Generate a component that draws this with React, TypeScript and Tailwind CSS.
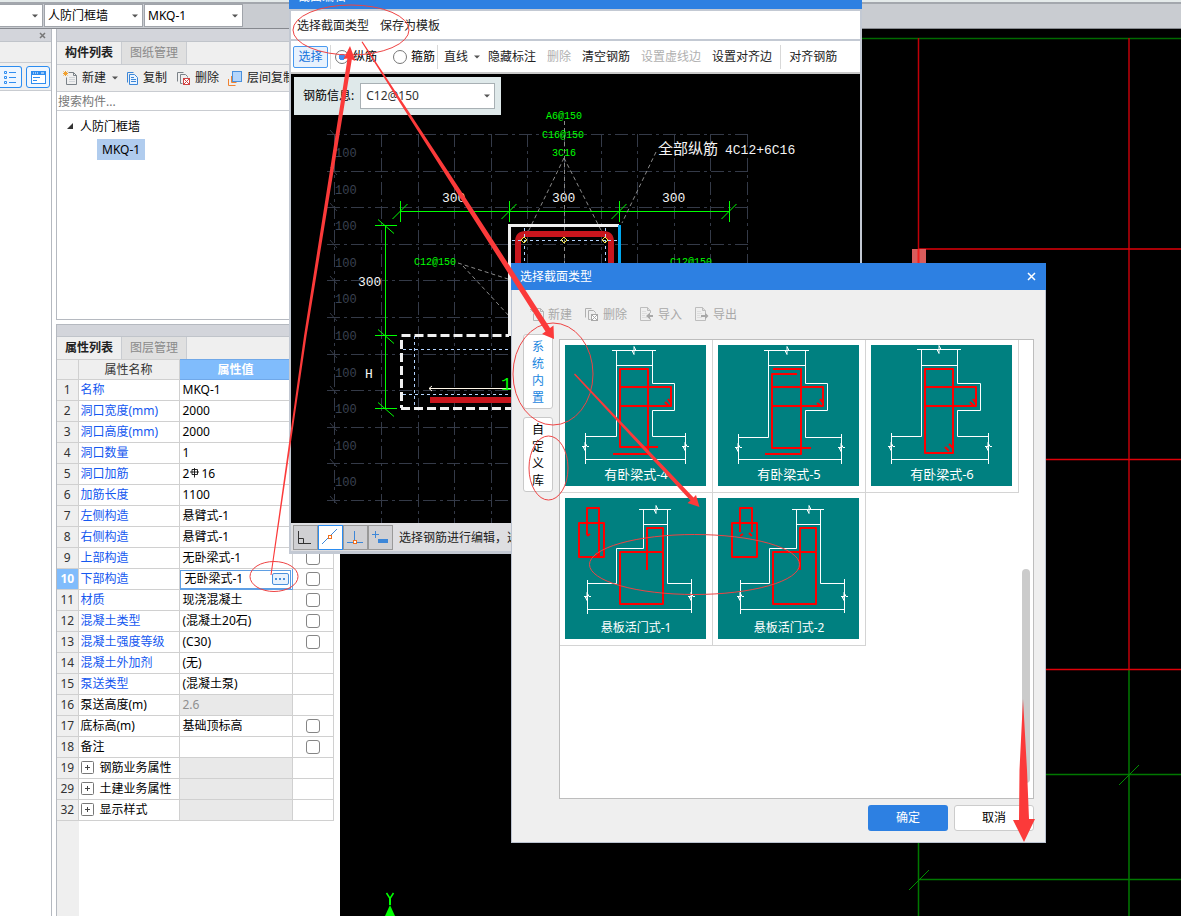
import React, { useState } from 'react';

const propertyRows = [
  { no: 1, name: '名称', value: 'MKQ-1', link: true },
  { no: 2, name: '洞口宽度(mm)', value: '2000', link: true, check: true },
  { no: 3, name: '洞口高度(mm)', value: '2000', link: true, check: true },
  { no: 4, name: '洞口数量', value: '1', link: true, check: true },
  { no: 5, name: '洞口加筋', value: '2Φ16', link: true, check: true },
  { no: 6, name: '加筋长度', value: '1100', link: true, check: true },
  { no: 7, name: '左侧构造', value: '悬臂式-1', link: true, check: true },
  { no: 8, name: '右侧构造', value: '悬臂式-1', link: true, check: true },
  { no: 9, name: '上部构造', value: '无卧梁式-1', link: true, check: true },
  { no: 10, name: '下部构造', value: '无卧梁式-1', link: true, check: true },
  { no: 11, name: '材质', value: '现浇混凝土', link: true, check: true },
  { no: 12, name: '混凝土类型', value: '(混凝土20石)', link: true, check: true },
  { no: 13, name: '混凝土强度等级', value: '(C30)', link: true, check: true },
  { no: 14, name: '混凝土外加剂', value: '(无)', link: true },
  { no: 15, name: '泵送类型', value: '(混凝土泵)', link: true },
  { no: 16, name: '泵送高度(m)', value: '2.6', disabled: true },
  { no: 17, name: '底标高(m)', value: '基础顶标高', check: true },
  { no: 18, name: '备注', value: '', check: true },
  { no: 19, name: '钢筋业务属性', group: true },
  { no: 29, name: '土建业务属性', group: true },
  { no: 32, name: '显示样式', group: true },
];

function Caret({ className = '' }) {
  return (
    <svg className={`shrink-0 ${className}`} width="6" height="4" viewBox="0 0 6 4">
      <path d="M0 0.5h6L3 3.5z" fill="#555" />
    </svg>
  );
}

function Picker({ label, value, className, selectClass }) {
  return (
    <div className={`relative ${className}`}>
      <select aria-label={label} className={`w-full h-full appearance-none bg-white border outline-none ${selectClass}`}>
        <option>{value}</option>
      </select>
      <Caret className="absolute right-[5px] top-1/2 -translate-y-1/2 pointer-events-none" />
    </div>
  );
}

/* ---------- toolbar icons ---------- */

function NewIcon({ muted = false }) {
  return (
    <svg width="15" height="15" viewBox="0 0 15 15" fill="none">
      <path d="M5.5 1.5h5l3 3v9h-10v-7" stroke={muted ? '#b5b5b5' : '#7b8288'} />
      <path d="M10.5 1.5v3h3" stroke={muted ? '#b5b5b5' : '#7b8288'} />
      <path d="M6 6.5h6M6 8.5h6M6 10.5h6" stroke={muted ? '#dedede' : '#d0d4d8'} />
      <path d="M2.5 0v5M0 2.5h5M0.5 0.5l4 4M4.5 0.5l-4 4" stroke={muted ? '#b5b5b5' : '#f0a030'} />
    </svg>
  );
}

function CopyIcon() {
  return (
    <svg width="13" height="15" viewBox="0 0 13 15" fill="none">
      <path d="M1.5 11.5v-10h6" stroke="#3d87d8" />
      <path d="M3.5 3.5h5l3 3v7h-8z" fill="#eaf4ff" stroke="#3d87d8" />
      <path d="M5 6.5h3M5 8.5h5M5 10.5h5" stroke="#3d87d8" />
    </svg>
  );
}

function DeleteIcon({ muted = false }) {
  const box = muted ? '#a8a8a8' : '#d04545';
  return (
    <svg width="15" height="15" viewBox="0 0 15 15" fill="none">
      <path d="M1.5 10.5v-9h6M6.5 12.5h-2v-9h5l2 2v1" stroke={muted ? '#b0b0b0' : '#7b8288'} />
      <rect x="7.5" y="7.5" width="6" height="6" stroke={box} fill="#fff" />
      <path d="M8 8l5 5M13 8l-5 5" stroke={box} />
    </svg>
  );
}

function LayerCopyIcon() {
  return (
    <svg width="15" height="15" viewBox="0 0 15 15" fill="none">
      <path d="M0.5 8v6.5h7M3.5 5v6.5h5" stroke="#ef8332" />
      <rect x="4.5" y="0.5" width="9" height="10" fill="#b5d6fb" stroke="#4a90dc" />
    </svg>
  );
}

function TransferIcon({ out = false }) {
  return (
    <svg width="15" height="15" viewBox="0 0 15 15" fill="none">
      <path d="M11.5 6V4l-3-3.5h-7v13h10v-2" stroke="#bdbdbd" />
      <path d="M8.5 0.5v3h3" stroke="#bdbdbd" />
      <path d="M3 4.5h4M3 6.5h5M3 8.5h3M3 10.5h5" stroke="#dedede" />
      {out ? (
        <path d="M7 8h4v-2.5l3.5 3.5l-3.500 3.5V10H7z" fill="#a8a8a8" />
      ) : (
        <path d="M14 8h-3v-2.5L7 9l4 3.500V10h3z" fill="#a8a8a8" />
      )}
    </svg>
  );
}

function RebarMark() {
  return (
    <svg className="inline-block align-baseline mx-px" width="10" height="10" viewBox="0 0 10 10" fill="none" stroke="#111">
      <path d="M4.500 0v9.500M2 1.500h5.500v5H2zM0 4h9" strokeWidth="0.900" />
    </svg>
  );
}

/* ---------- background model space ---------- */

function ModelSpace() {
  return (
    <svg className="absolute inset-0 w-full h-full" fill="none">
      <g transform="translate(-340 -29)">
        <path d="M340 38.500H3000" stroke="#006a00" strokeWidth="1.500" />
        <path d="M918.500 669V3000M1129 669V3000M918 774.500H3000M918 879.500H3000" stroke="#007800" strokeWidth="1.500" />
        <path d="M909 890l20-20M1119 785l20-20" stroke="#009000" />
        <path d="M918.500 38V669M1129 38V669" stroke="#c00008" strokeWidth="1.500" />
        <path d="M918 249H3000M918 459.500H3000M918 669.500H3000" stroke="#e00008" strokeWidth="1.500" />
        <rect x="912" y="249" width="14" height="200" fill="#d85c5c" />
        <path d="M918.500 249v200" stroke="#f02020" strokeWidth="2" />
        <path d="M386.500 893l3.500 5.500l3.500-5.500" stroke="#00ff00" strokeWidth="1.500" />
        <path d="M390 898v7" stroke="#00ff00" strokeWidth="2" />
        <path d="M390 905l5 11h-10z" fill="#00ff00" />
      </g>
    </svg>
  );
}

/* ---------- section drawing ---------- */

const gridX = Array.from({ length: 11 }, (_, i) => Math.floor(381.5 + i * 36.6));
const gridY = Array.from({ length: 11 }, (_, i) => Math.floor(134.5 + i * 36.6));

function SectionDrawing() {
  return (
    <svg
      className="block w-full h-[449px] bg-black font-['Liberation_Mono','Noto_Sans_CJK_SC',monospace]"
      viewBox="291 74 569 449"
      preserveAspectRatio="xMinYMin slice"
      fill="none"
    >
      <g stroke="#343a48" strokeDasharray="13 4 3 4">
        {gridX.map((x) => (
          <path key={x} d={`M${x}.5 134V523`} />
        ))}
        {gridY.map((y) => (
          <path key={y} d={`M327 ${y}.5H748`} />
        ))}
        <path d="M334.500 134V503" />
      </g>
      {gridY.map((y) => (
        <path key={y} d={`M330 ${y - 4}l7 8`} stroke="#343a48" />
      ))}
      <g fill="#3b4251" fontSize="12">
        {gridY.slice(0, 10).map((y) => (
          <text key={y} x="335" y={y + 23}>100</text>
        ))}
      </g>

      <g stroke="#00ff00">
        <path d="M400.500 211.500H729.500" />
        {[400.5, 509.5, 619.5, 729.5].map((x) => (
          <path key={x} d={`M${x} 201v21M${x - 8} 219l15-15`} />
        ))}
        <path d="M385.500 225.500V408.500" />
        {[225.5, 335.5, 408.5].map((y) => (
          <path key={y} d={`M375 ${y}h22M378 ${y - 6}l16 14`} />
        ))}
      </g>
      <g fill="#f4f4f4" fontSize="13">
        <text x="442" y="202">300</text>
        <text x="552" y="202">300</text>
        <text x="662" y="202">300</text>
        <text x="358" y="286">300</text>
        <text x="365" y="378">H</text>
        <text x="658" y="154" fontSize="15">全部纵筋</text>
        <text x="725" y="154">4C12+6C16</text>
      </g>

      <g stroke="#8a8a8a" strokeDasharray="4 3">
        <path d="M564.500 121V263M564 158L528 232M564 158l40 78M656 152l-34 71" />
        <path d="M458 263l53 17M463 266l47 51" />
      </g>

      <path d="M401.500 335.500H509M401.500 340v68M401 408.500H520" stroke="#f0f0f0" strokeWidth="3" strokeDasharray="9 4" />
      <path d="M509.500 336V225.500H619" stroke="#f0f0f0" strokeWidth="3" />
      <path d="M619.500 225V280" stroke="#00a8f0" strokeWidth="3" />
      <path d="M518 280V242q0 -8 8 -8H603q8 0 8 8V280" stroke="#c8161d" strokeWidth="6" />
      <path
        d="M414.500 336V408M403 349.500H520M403 394.500H520M512 240.500H618M524.500 228V280M605.500 228V280"
        stroke="#b4d4ff"
        strokeDasharray="3 3"
      />
      {[524, 564, 605].map((x) => (
        <path key={x} d={`M${x} 237l3 3l-3 3l-3 -3z`} stroke="#f5e642" />
      ))}
      <path d="M429 388.500H520M432 386l-3 2.500l3 2.500" stroke="#fff8ea" />
      <path d="M430 400H520" stroke="#c8161d" strokeWidth="6" />

      <g fill="#00ff00" fontSize="10">
        <text x="546" y="119">A6@150</text>
        <text x="542" y="138">C16@150</text>
        <text x="552" y="156">3C16</text>
        <text x="414" y="265">C12@150</text>
        <text x="670" y="265">C12@150</text>
        <text x="501" y="390" fontSize="18">1</text>
      </g>
    </svg>
  );
}

/* ---------- section templates ---------- */

const breakMark = (x, y) => `M${x - 3} ${y}.5h3l-2 0l2 4v-8l2 4h2`;

const templates = [
  {
    title: '有卧梁式-4',
    size: 13,
    white:
      'M47 5.5H91M51.5 5.5V91.5H20.5M87.5 5.5V38.5H109.5V65.5H87.5V91.5H120.5M51.5 20.5H87.5M20.5 88V119M120.5 88V119M20.5 114.5H120.5',
    red: 'M93 102H55V24H83V109H48M55 42H106V61H55M100 57l4 4M103 54l3 4',
    marks: [[69, 5], [20, 101], [120, 101]],
  },
  {
    title: '有卧梁式-5',
    size: 13,
    white:
      'M46 5.5H91M50.5 5.5V92.5H20.5M87.5 5.5V38.5H109.5V65.5H87.5V92.5H123.5M50.5 20.5H87.5M20.5 89V119M123.5 89V119M20.5 114.5H123.5',
    red: 'M55 24H83V109H47M79 29H54V103H93M54 42H105V61H54M99 58l4 3M102 54l3 4',
    marks: [[69, 5], [20, 102], [123, 102]],
  },
  {
    title: '有卧梁式-6',
    size: 13,
    white:
      'M46 4.5H90M50.5 4.5V91.5H20.5M86.5 4.5V38.5H109.5V65.5H86.5V91.5H117.5M50.5 20.5H86.5M20.5 88V119M117.5 88V119M20.5 114.5H117.5',
    red: 'M54 24H82V108H54ZM54 42H105V61H54M99 57l4 4M102 54l3 4M74 102l4 4M78 99l4 4',
    marks: [[68, 4], [20, 101], [117, 101]],
  },
  {
    title: '悬板活门式-1',
    size: 12,
    white:
      'M74 11.5H106M78.5 11.5V50.5H51.5V85.5H22.5M102.5 11.5V85.5H126.5M78.5 26.5H102.5M22.5 82V116M126.5 81V115M22.5 111.5H126.5',
    red: 'M55 54H98V106H55ZM82 72V30H98V53M14 25H39V59H14ZM22 37V10H34V59M22 38l3 -2M31 55l3 4',
    marks: [[91, 11], [22, 98], [126, 98]],
  },
  {
    title: '悬板活门式-2',
    size: 12,
    white:
      'M74 11.5H106M78.5 11.5V50.5H51.5V85.5H22.5M102.5 11.5V85.5H126.5M78.5 26.5H102.5M22.5 82V116M126.5 81V115M22.5 111.5H126.5',
    red: 'M55 54H98V106H55ZM82 72V30H98V53M14 25H39V59H14ZM22 34V10H34V34M22 38l3 -2M34 38l-3 -3',
    marks: [[91, 11], [22, 98], [126, 98]],
  },
];

function TemplateCard({ item }) {
  return (
    <button className="w-[153px] h-[153px] flex items-start pl-[5px] pt-[5px] border-r border-b border-[#d4d4d4]">
      <svg width="141" height="141" viewBox="0 0 141 141" fill="none" className="bg-[#008080]">
        <path d={item.white} stroke="#fff" />
        <path d={item.marks.map(([x, y]) => breakMark(x, y)).join('')} stroke="#fff" />
        <path d={item.red} stroke="#ff0000" strokeWidth="2" strokeLinejoin="round" />
        <text x="71" y="134" textAnchor="middle" fill="#fff" fontSize={item.size}>{item.title}</text>
      </svg>
    </button>
  );
}

/* ---------- windows ---------- */

function ToolButton({ children, disabled = false }) {
  return (
    <button disabled={disabled} className="h-[22px] px-[5px] shrink-0 whitespace-nowrap text-[#222] disabled:text-[#b0b0b0]">
      {children}
    </button>
  );
}

function SectionEditor() {
  const [barKind, setBarKind] = useState('long');
  const radioClass =
    'appearance-none size-[14px] rounded-full border border-[#777] bg-white checked:bg-[radial-gradient(#3f8cf0_35%,#fff_42%)]';

  return (
    <section className="absolute left-[289px] top-0 w-[573px] bg-white border-x-2 border-b-3 border-[#c3c9d3]">
      <div className="h-[9px] -mx-[2px] px-[9px] bg-[#2d80e2] overflow-hidden flex items-end">
        <h2 className="text-white leading-[14px] mb-[5px]">截面编辑</h2>
      </div>
      <div className="h-8 border-y-2 border-[#c3c9d3] flex items-center pt-[2px] px-px gap-px">
        <ToolButton>选择截面类型</ToolButton>
        <ToolButton>保存为模板</ToolButton>
      </div>
      <div className="h-[33px] border-b-2 border-[#c8c8c8] flex items-center pt-px pl-[2px]">
        <button className="w-[35px] h-[22px] shrink-0 rounded-[2px] border border-[#4a9af0] bg-[#e8f2fd] text-[#1673dc]">选择</button>
        <span className="w-px h-6 bg-[#d8d8d8] ml-[2px] mr-1" />
        <label className="flex items-center gap-1 mr-4 text-black shrink-0">
          <input type="radio" name="bar" className={radioClass} checked={barKind === 'long'} onChange={() => setBarKind('long')} />
          纵筋
        </label>
        <label className="flex items-center gap-1 text-black shrink-0">
          <input type="radio" name="bar" className={radioClass} checked={barKind === 'hoop'} onChange={() => setBarKind('hoop')} />
          箍筋
        </label>
        <span className="w-px h-6 bg-[#d8d8d8] ml-[2px]" />
        <button className="h-[22px] pl-[6px] pr-[3px] flex items-center gap-[6px] text-[#222] shrink-0">
          直线
          <Caret />
        </button>
        <div className="flex gap-px">
          <ToolButton>隐藏标注</ToolButton>
          <ToolButton disabled>删除</ToolButton>
          <ToolButton>清空钢筋</ToolButton>
          <ToolButton disabled>设置虚线边</ToolButton>
          <ToolButton>设置对齐边</ToolButton>
        </div>
        <span className="w-px h-6 bg-[#d8d8d8] mx-[3px]" />
        <ToolButton>对齐钢筋</ToolButton>
      </div>

      <div className="relative">
        <SectionDrawing />
        <div className="absolute left-[3px] top-[3px] w-[207px] h-[38px] bg-[#dfe9ea] flex items-center pl-[9px] gap-[6px]">
          <span className="text-black whitespace-nowrap">钢筋信息:</span>
          <Picker
            label="钢筋信息"
            value="C12@150"
            className="w-[135px] h-[26px]"
            selectClass="border-[#a8b0b4] px-[5px] text-[#333]"
          />
        </div>
      </div>

      <footer className="h-7 bg-[#dedee1] flex items-center pt-px pl-[2px]">
        <button aria-label="正交" className="size-[25px] bg-[#d0d0d3] border border-[#999]">
          <svg width="23" height="23" viewBox="0 0 23 23" fill="none" stroke="#333">
            <path d="M4.5 5v12.5H17M4.5 12.5h5v5" />
          </svg>
        </button>
        <button aria-label="中点" className="size-[25px] bg-white border border-[#2b8cf0]">
          <svg width="23" height="23" viewBox="0 0 23 23" fill="none">
            <path d="M3 18L18 3" stroke="#3d87d8" />
            <rect x="9.5" y="9.5" width="3" height="3" fill="#fff" stroke="#ef7020" />
          </svg>
        </button>
        <button aria-label="垂点" className="size-[25px] bg-[#d0d0d3] border border-[#999]">
          <svg width="23" height="23" viewBox="0 0 23 23" fill="none">
            <path d="M3 16.5h16M10.5 5v11" stroke="#3d87d8" />
            <rect x="9.5" y="14.5" width="3" height="3" fill="#fff" stroke="#ef7020" />
          </svg>
        </button>
        <button aria-label="动态输入" className="size-[25px] bg-[#d0d0d3] border border-[#999]">
          <svg width="23" height="23" viewBox="0 0 23 23" fill="none">
            <path d="M3 8.5h7M6.5 5v7" stroke="#3d87d8" />
            <rect x="9" y="13" width="10" height="4" fill="#3d87d8" />
          </svg>
        </button>
        <span className="ml-[6px] text-[#222] whitespace-nowrap">选择钢筋进行编辑，选中</span>
      </footer>
    </section>
  );
}

function SectionTypeDialog() {
  const [tab, setTab] = useState('系统内置');

  return (
    <section className="absolute left-[511px] top-[263px] w-[535px] bg-[#efefef] border border-t-0 border-[#bcc3d0]">
      <header className="h-[27px] -mx-px pl-[9px] pr-[10px] bg-[#2d80e2] text-white flex items-center justify-between">
        <h2>选择截面类型</h2>
        <button aria-label="关闭" className="size-[9px]">
          <svg width="9" height="9" viewBox="0 0 9 9" stroke="#fff" strokeWidth="1.5">
            <path d="M1 1l7 7M8 1l-7 7" />
          </svg>
        </button>
      </header>

      <div className="h-[49px] pl-[18px] flex items-center gap-3 text-[#a9a9a9] whitespace-nowrap">
        <button className="flex items-center gap-[3px]"><NewIcon muted />新建</button>
        <button className="flex items-center gap-1"><DeleteIcon muted />删除</button>
        <button className="flex items-center gap-1"><TransferIcon />导入</button>
        <button className="flex items-center gap-1"><TransferIcon out />导出</button>
      </div>

      <div className="flex pl-[11px] pr-[11px]">
        <div className="w-[30px] -mt-[5px] mr-[6px] flex flex-col gap-2 shrink-0">
          {['系统内置', '自定义库'].map((name) => (
            <button
              key={name}
              onClick={() => setTab(name)}
              className={`h-[75px] pl-2 pr-[9px] leading-[17px] bg-white border border-[#c9c9c9] rounded-[3px] ${
                tab === name ? 'text-[#1a86e0]' : 'text-black'
              }`}
            >
              {name}
            </button>
          ))}
        </div>
        <div className="relative flex-1 h-[460px] bg-white border border-[#bdbdbd]">
          <div className="flex flex-wrap content-start">
            {templates.map((item) => (
              <TemplateCard key={item.title} item={item} />
            ))}
          </div>
          <div className="absolute right-[3px] bottom-[15px] w-2 h-[214px] rounded-full bg-[#cbcbcb]" />
        </div>
      </div>

      <footer className="flex justify-end gap-[6px] pt-[6px] pb-[11px] pr-[11px]">
        <button className="w-20 h-[26px] rounded-[3px] bg-[#2d80e2] text-white">确定</button>
        <button className="w-20 h-[26px] rounded-[3px] bg-white border border-[#cccccc] text-black">取消</button>
      </footer>
    </section>
  );
}

/* ---------- docked panels ---------- */

function PanelTabs({ active, other }) {
  return (
    <div className="h-[22px] shrink-0 bg-[#efefef] flex text-[#222]">
      <button className="px-2 font-bold border-r border-[#c9ccd1]">{active}</button>
      <button className="px-2 bg-[#e0e0e0] text-[#8a8a8a] border-r border-[#c9ccd1]">{other}</button>
    </div>
  );
}

function ComponentPanel() {
  return (
    <section className="h-[291px] shrink-0 flex flex-col bg-white border-l border-b border-[#b5b9c0]">
      <div className="h-[13px] bg-[#d3d5db] border-b border-[#c0c4ca]" />
      <PanelTabs active="构件列表" other="图纸管理" />
      <div className="h-7 bg-[#efefef] border-y border-[#c9ccd1] flex items-center pl-[6px] text-[#222] whitespace-nowrap overflow-hidden">
        <button className="flex items-center gap-1 mr-2"><NewIcon />新建<Caret className="ml-[2px]" /></button>
        <button className="flex items-center gap-1 mr-[9px]"><CopyIcon />复制</button>
        <button className="flex items-center gap-1 mr-[9px]"><DeleteIcon />删除</button>
        <button className="flex items-center gap-1"><LayerCopyIcon />层间复制</button>
      </div>
      <input aria-label="搜索构件" placeholder="搜索构件..." className="h-[19px] px-px border-b border-[#c9ccd1] outline-none placeholder:text-[#777]" />
      <ul className="pt-1 text-black leading-[21px]">
        <li className="flex items-center pl-[10px] h-[22px]">
          <svg width="6" height="6" viewBox="0 0 6 6" className="mr-[7px]">
            <path d="M6 0v6H0z" fill="#333" />
          </svg>
          人防门框墙
        </li>
        <li className="pl-10 pt-[2px]">
          <span className="inline-block px-[5px] bg-[#b0ccee]">MKQ-1</span>
        </li>
      </ul>
    </section>
  );
}

function PropertyPanel() {
  return (
    <section className="flex-1 flex flex-col bg-white border-l border-t border-[#b5b9c0]">
      <div className="h-3 bg-[#d3d5db] border-b border-[#c0c4ca]" />
      <PanelTabs active="属性列表" other="图层管理" />
      <table className="w-[276px] table-fixed border-collapse text-black whitespace-nowrap">
        <colgroup>
          <col className="w-[21px]" />
          <col className="w-[101px]" />
          <col className="w-[113px]" />
          <col className="w-[41px]" />
        </colgroup>
        <thead>
          <tr className="h-5 bg-[#efefef] text-[#333]">
            <th className="p-0 border border-l-0 border-[#d0d0d0]" />
            <th className="p-0 font-normal border border-[#d0d0d0]">属性名称</th>
            <th className="p-0 font-bold text-white bg-[#80bcfc] border border-[#70a8e8]">属性值</th>
            <th className="p-0 font-normal border border-[#d0d0d0]">附加</th>
          </tr>
        </thead>
        <tbody>
          {propertyRows.map((row) => {
            const active = row.no === 10;
            return (
              <tr key={row.no} className="h-[21px]">
                <td className={`p-0 text-center border border-l-0 border-[#d0d0d0] ${active ? 'bg-[#80bcfc] text-white font-bold' : 'bg-[#efefef] text-[#333]'}`}>
                  {row.no}
                </td>
                <td className={`p-0 pl-[2px] border border-[#d0d0d0] ${row.link ? 'text-[#1458f0]' : ''}`}>
                  {row.group && (
                    <button aria-label={`展开${row.name}`} className="inline-block align-[-2px] mr-[6px]">
                      <svg width="13" height="13" viewBox="0 0 13 13" fill="none" stroke="#444">
                        <rect x="0.5" y="0.5" width="12" height="12" rx="1" stroke="#777" />
                        <path d="M4 6.5h5M6.5 4v5" />
                      </svg>
                    </button>
                  )}
                  {row.name}
                </td>
                <td
                  className={`p-0 border ${active ? 'pl-[5px] border-[#5f9fe4] outline outline-[#5f9fe4] -outline-offset-2' : 'pl-[3px] border-[#d0d0d0]'} ${
                    row.disabled || row.group ? 'bg-[#e9e9e9] text-[#8f8f8f]' : ''
                  }`}
                >
                  {active ? (
                    <div className="flex items-center justify-between pr-[3px]">
                      {row.value}
                      <button aria-label="选择构造" className="w-[17px] h-3 rounded-[2px] border border-[#4a90dc] bg-[#e8f2fd] flex items-center justify-center gap-[2px]">
                        <span className="size-[2px] bg-[#4a90dc]" />
                        <span className="size-[2px] bg-[#4a90dc]" />
                        <span className="size-[2px] bg-[#4a90dc]" />
                      </button>
                    </div>
                  ) : row.no === 5 ? (
                    <>2<RebarMark />16</>
                  ) : (
                    row.value
                  )}
                </td>
                <td className="p-0 border border-[#d0d0d0]">
                  {row.check && (
                    <input
                      type="checkbox"
                      aria-label={`附加${row.name}`}
                      className="block mx-auto appearance-none size-[14px] rounded-[3px] border border-[#858585] bg-white checked:bg-[#2d80e2]"
                    />
                  )}
                </td>
              </tr>
            );
          })}
        </tbody>
      </table>
      <div className="flex-1 w-[22px] bg-[#efefef]" />
    </section>
  );
}

/* ---------- red markup ---------- */

function Markup() {
  return (
    <svg className="absolute inset-0 w-full h-full pointer-events-none" fill="none">
      <g stroke="#ee4444">
        <ellipse cx="351" cy="30" rx="58" ry="25" />
        <ellipse cx="553" cy="374" rx="40" ry="51" />
        <ellipse cx="548.5" cy="468" rx="19.5" ry="32" />
        <ellipse cx="694.5" cy="564.5" rx="105" ry="30" />
        <ellipse cx="274" cy="576.5" rx="24" ry="15" />
      </g>
      <g fill="#fb3a3a">
        <path d="M270.5 575L304 336L347.5 58.5L343.5 59L350 46L355.5 61L351.8 59.5L306.5 336L271.5 575z" />
        <path d="M361.5 42L459 196L545.5 331.5L542 334L554 339L553.5 325.5L550 328L463 194L362.5 41.5z" />
        <path d="M574 374.5L690.5 500.5L687.5 503L699.5 507L696 495L693.5 497.5L575 373.5z" />
        <path d="M1023 699L1019.5 770L1019 820H1013L1024 842L1035 819H1029L1027 770z" />
      </g>
    </svg>
  );
}

export default function App() {
  return (
    <div className="relative h-screen overflow-hidden flex flex-col bg-white text-[12px] leading-[16px] font-['Noto_Sans','Noto_Sans_CJK_SC',sans-serif]">
      <header className="h-[29px] shrink-0 bg-[#c9ccd1] border-b border-[#85888e]">
        <div className="h-1 bg-[#e4eaea] border-b-2 border-[#a3a7ad]" />
        <div className="flex gap-px h-[23px]">
          <Picker label="楼层" value="" className="w-[43px]" selectClass="border-[#a0a4aa] border-l-0" />
          <Picker label="构件类型" value="人防门框墙" className="w-[99px]" selectClass="border-[#a0a4aa] px-[3px] text-black" />
          <Picker label="构件" value="MKQ-1" className="w-[99px]" selectClass="border-[#a0a4aa] px-[3px] text-black" />
        </div>
      </header>

      <main className="flex-1 flex min-h-0">
        <aside className="w-[52px] shrink-0 border-r border-[#b5b9c0]">
          <div className="h-[13px] bg-[#d3d5db] border-b border-[#c0c4ca] flex items-center justify-end pr-[5px]">
            <button aria-label="关闭面板">
              <svg className="block" width="7" height="7" viewBox="0 0 7 7" stroke="#777" strokeWidth="1.5">
                <path d="M1 1l5 5M6 1l-5 5" />
              </svg>
            </button>
          </div>
          <div className="h-[21px] bg-[#efefef] border-b border-[#c9ccd1]" />
          <div className="h-7 bg-[#efefef] border-b border-[#c9ccd1] flex items-center justify-between pr-px">
            <button aria-label="列表视图" className="w-[22px] h-[22px] border border-l-0 border-[#2b8cf0] rounded-r-[3px] bg-[#eef6ff]">
              <svg width="21" height="20" viewBox="0 0 21 20" fill="none" stroke="#2f8df0">
                <path d="M4.5 4.5h2v2h-2zM4.5 9.5h2v2h-2zM4.5 14.5h2v2h-2zM9 5.5h7M9 10.5h7M9 15.5h7" />
              </svg>
            </button>
            <button aria-label="面板视图" className="w-6 h-[22px] border border-[#2b8cf0] rounded-[3px] bg-[#eef6ff]">
              <svg width="22" height="20" viewBox="0 0 22 20" fill="none">
                <rect x="4.5" y="4.5" width="14" height="12" fill="#fff" stroke="#2f8df0" />
                <path d="M4 4h15v4H4z" fill="#2f8df0" />
                <path d="M6 6h1M8 6h1M10 6h1M14 6h3" stroke="#fff" />
                <path d="M6 10.5h7M6 13.5h4" stroke="#2f8df0" />
              </svg>
            </button>
          </div>
        </aside>

        <div className="w-[288px] shrink-0 pl-1 pr-1 flex flex-col gap-1">
          <ComponentPanel />
          <PropertyPanel />
        </div>

        <div className="relative flex-1 bg-black">
          <ModelSpace />
        </div>
      </main>

      <SectionEditor />
      <SectionTypeDialog />
      <Markup />
    </div>
  );
}
